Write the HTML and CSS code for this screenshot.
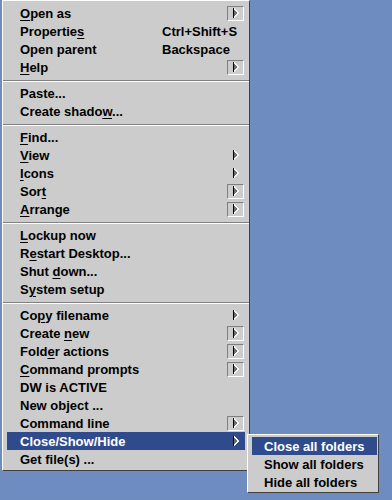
FILE: index.html
```html
<!DOCTYPE html>
<html lang="en">
<head>
  <meta charset="UTF-8">
  <title>Desktop menu</title>
  <link rel="stylesheet" href="styles.css">
</head>
<body>
  <svg class="defs" width="0" height="0">
    <symbol id="tri" viewBox="0 0 6 10">
      <path d="M0 0L6 5L0 10Z" fill="#6e6e6e"/>
      <path d="M1 0.5L5.5 5L1 9.5" fill="none" stroke="#f4f4f4" stroke-width="1"/>
      <path d="M0.5 0V10" stroke="#000" stroke-width="1"/>
    </symbol>
  </svg>

  <!-- Kontextmenu -->
  <div class="menu">
    <div class="item"><span class="label"><u>O</u>pen as</span><span class="arrow boxed"><svg><use href="#tri"/></svg></span></div>
    <div class="item"><span class="label">Propertie<u>s</u></span><span class="key">Ctrl+Shift+S</span></div>
    <div class="item"><span class="label">Open parent</span><span class="key">Backspace</span></div>
    <div class="item"><span class="label"><u>H</u>elp</span><span class="arrow boxed"><svg><use href="#tri"/></svg></span></div>
    <div class="sep"></div>
    <div class="item"><span class="label">Paste...</span></div>
    <div class="item"><span class="label">Create shado<u>w</u>...</span></div>
    <div class="sep"></div>
    <div class="item"><span class="label"><u>F</u>ind...</span></div>
    <div class="item"><span class="label"><u>V</u>iew</span><span class="arrow"><svg><use href="#tri"/></svg></span></div>
    <div class="item"><span class="label"><u>I</u>cons</span><span class="arrow"><svg><use href="#tri"/></svg></span></div>
    <div class="item"><span class="label">Sor<u>t</u></span><span class="arrow boxed"><svg><use href="#tri"/></svg></span></div>
    <div class="item"><span class="label"><u>A</u>rrange</span><span class="arrow boxed"><svg><use href="#tri"/></svg></span></div>
    <div class="sep"></div>
    <div class="item"><span class="label"><u>L</u>ockup now</span></div>
    <div class="item"><span class="label">R<u>e</u>start Desktop...</span></div>
    <div class="item"><span class="label">Shut <u>d</u>own...</span></div>
    <div class="item"><span class="label">S<u>y</u>stem setup</span></div>
    <div class="sep"></div>
    <div class="item"><span class="label">Co<u>p</u>y filename</span><span class="arrow"><svg><use href="#tri"/></svg></span></div>
    <div class="item"><span class="label">Create <u>n</u>ew</span><span class="arrow boxed"><svg><use href="#tri"/></svg></span></div>
    <div class="item"><span class="label">Fold<u>e</u>r actions</span><span class="arrow boxed"><svg><use href="#tri"/></svg></span></div>
    <div class="item"><span class="label"><u>C</u>ommand prompts</span><span class="arrow boxed"><svg><use href="#tri"/></svg></span></div>
    <div class="item"><span class="label">DW is ACTIVE</span></div>
    <div class="item"><span class="label">New object ...</span></div>
    <div class="item"><span class="label">Command line</span><span class="arrow boxed"><svg><use href="#tri"/></svg></span></div>
    <div class="item active"><span class="label">Close/Show/Hide</span><span class="arrow"><svg><use href="#tri"/></svg></span></div>
    <div class="item"><span class="label">Get file(s) ...</span></div>
  </div>

  <!-- Untermenu -->
  <div class="submenu">
    <div class="item active">Close all folders</div>
    <div class="item">Show all folders</div>
    <div class="item">Hide all folders</div>
  </div>
</body>
</html>
```

FILE: styles.css
```css
* {
  margin: 0;
  padding: 0;
  box-sizing: border-box;
}

body {
  height: 100vh;
  position: relative;
  overflow: hidden;
  background: #6f8cc0;
  color: #000;
  font: bold 13px "Liberation Sans", Arial, sans-serif;
}

.defs {
  position: absolute;
}

/* Hauptmenu */
.menu {
  width: 248px;
  margin-left: 2px;
  background: #cccccc;
  border: 1px solid;
  border-color: #ffffff #404040 #404040 #ffffff;
  padding: 3px 4px 2px;
}

.item {
  display: flex;
  align-items: center;
  height: 18px;
  padding-left: 13px;
  white-space: nowrap;
}

.item u {
  text-decoration-thickness: 1px;
  text-underline-offset: 2px;
}

.item.active {
  background: #304b8c;
  color: #fff;
}

.label {
  width: 142px;
  flex: none;
}

.key {
  flex: 1;
}

/* Pfeile */
.arrow {
  margin-left: auto;
  width: 18px;
  height: 15px;
  display: flex;
  align-items: center;
  padding-left: 6px;
}

.arrow svg {
  flex: none;
  width: 6px;
  height: 10px;
  shape-rendering: crispEdges;
}

.arrow.boxed {
  width: 17px;
  margin-right: 1px;
  padding-left: 5px;
  border: 1px solid;
  border-color: #808080 #ffffff #ffffff #808080;
}

/* Trennlinie */
.sep {
  height: 2px;
  margin: 4px -4px 2px;
  border-top: 1px solid #808080;
  border-bottom: 1px solid #ffffff;
}

/* Untermenu */
.submenu {
  position: absolute;
  left: 247px;
  top: 434px;
  width: 132px;
  background: #cccccc;
  border: 1px solid;
  border-color: #ffffff #404040 #404040 #ffffff;
  padding: 2px 1px 1px 4px;
}

.submenu .item {
  padding-left: 12px;
}
```
